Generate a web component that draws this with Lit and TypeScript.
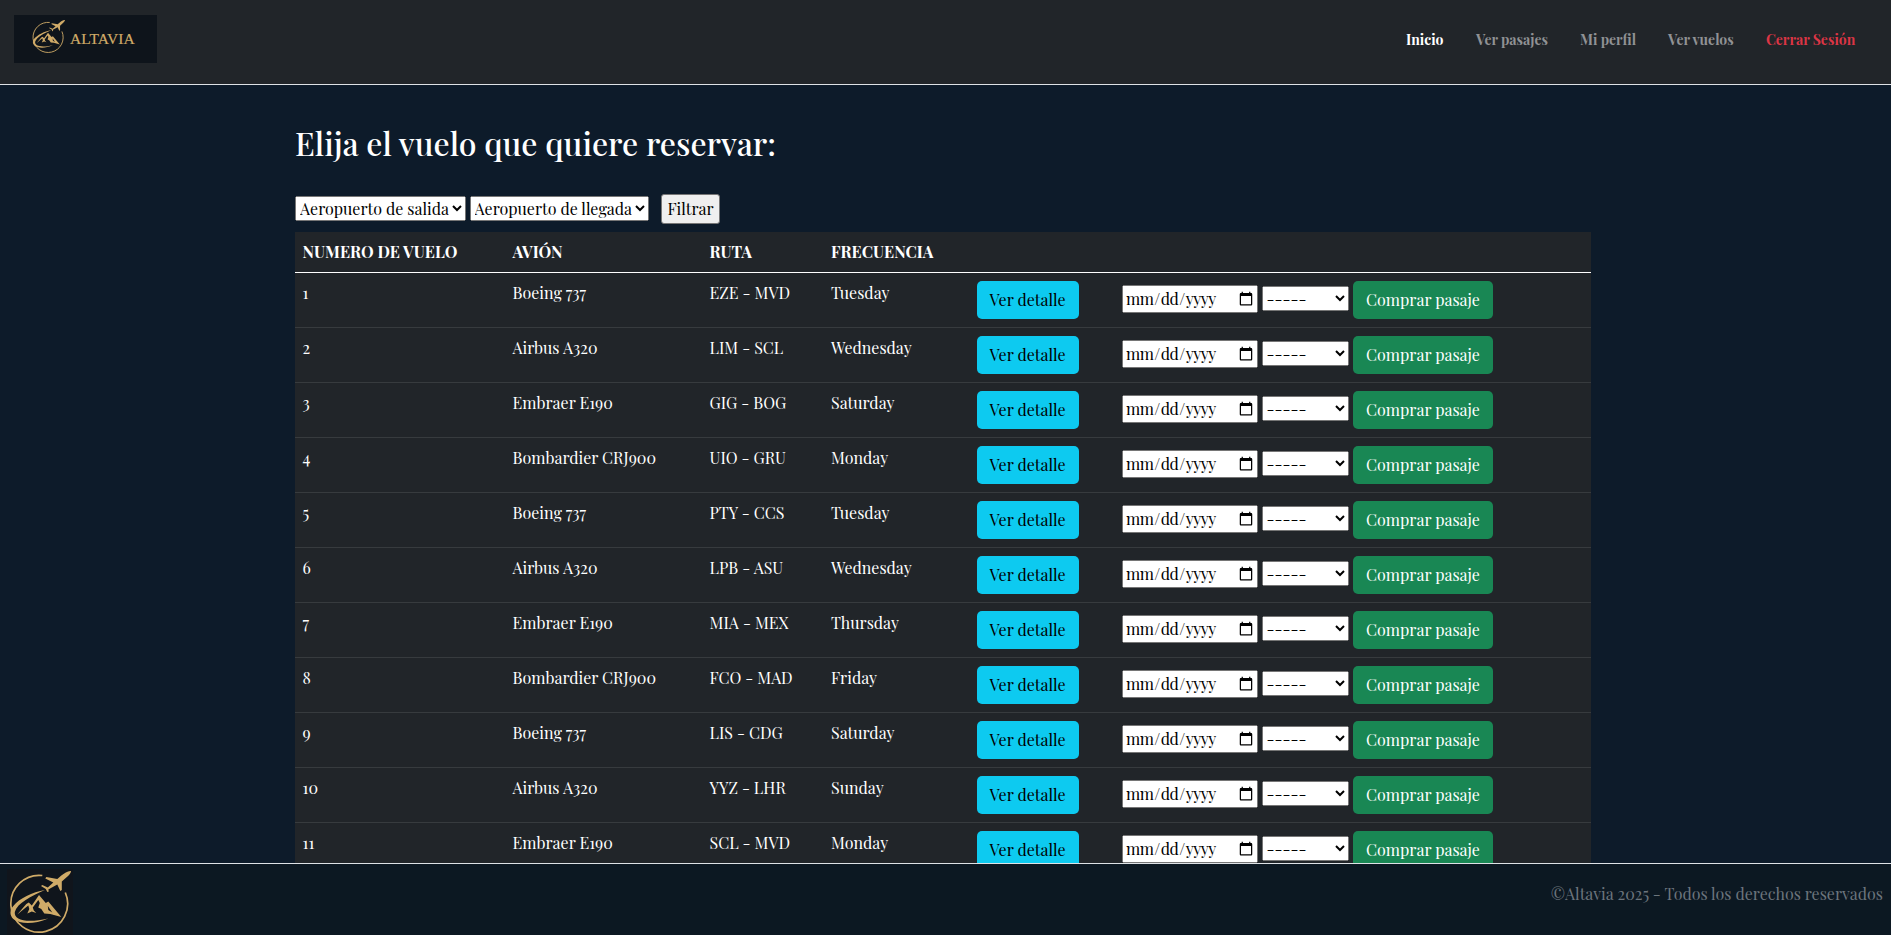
import { LitElement, html, css, svg } from "lit";
import { customElement, property } from "lit/decorators.js";

const FLIGHTS: [string, string, string][] = [
  ["Boeing 737", "EZE - MVD", "Tuesday"],
  ["Airbus A320", "LIM - SCL", "Wednesday"],
  ["Embraer E190", "GIG - BOG", "Saturday"],
  ["Bombardier CRJ900", "UIO - GRU", "Monday"],
  ["Boeing 737", "PTY - CCS", "Tuesday"],
  ["Airbus A320", "LPB - ASU", "Wednesday"],
  ["Embraer E190", "MIA - MEX", "Thursday"],
  ["Bombardier CRJ900", "FCO - MAD", "Friday"],
  ["Boeing 737", "LIS - CDG", "Saturday"],
  ["Airbus A320", "YYZ - LHR", "Sunday"],
  ["Embraer E190", "SCL - MVD", "Monday"],
];

@customElement("alta-emblem")
export class AltaEmblem extends LitElement {
  static styles = css`
    :host { display: block; }
    svg { display: block; width: 100%; height: 100%; }
  `;
  render() {
    return html`<svg viewBox="0.700 0 66 66" fill="#d0ab68">
      ${svg`
      <path d="M36 6.500A28.400 28.400 0 1 0 59 23.500" fill="none" stroke="#d0ab68" stroke-width="1.700"/>
      <path d="M38.700 21C25 27 11 34 8.500 43C7.500 51 20 54.500 42 49.500C28 55.500 14 55.500 7 50C3 46 3.500 41 7 37C13 29.500 26 23 38.700 21Z"/>
      <path d="M64.700 2C62 1.500 58 4 55 6.500L51 10L40 8L39 9.500L47 13.500L41.500 18.500L36 16L34.700 17L39.500 20L41 23L42.500 22.500L42 20.500L51 15.500L54 22L55.500 21L55.500 12.500L60 8.500C63 6 65 3.500 64.700 2Z"/>
      <path d="M11 45.500L20 35L22.500 33.500L25.500 36.500L32.700 26L39.500 34L42 32.500L55 48L44 45L38 44.500L35 40L32 38.500L33.500 34L32 31L26.500 38.500L27.500 41.500L30 44L25.500 42.500L21 44.500L23 40L22 36.500L17 40.500Z"/>
      <path d="M41.500 37L46 43.500L42 41Z" fill="#10151c"/>`}
    </svg>`;
  }
}

@customElement("flight-table")
export class FlightTable extends LitElement {
  @property({ attribute: false }) flights = FLIGHTS;
  static styles = css`
    :host { display: block; }
    .row { display: grid; grid-template-columns: 210px 197px 121.500px 145.500px 145.500px 1fr; height: 54px; border-bottom: 1px solid #373b3e; background: #212529; }
    .head { height: 40px; border-bottom-color: #fff; font-weight: bold; }
    .cell { padding: 8px 7.500px; white-space: nowrap; }
    .btn { height: 38px; box-sizing: border-box; border: 0; border-radius: 5px; padding: 0; font: inherit; }
    .info { width: 102px; background: #0dcaf0; color: #000; }
    .buy { width: 140px; background: #198754; color: #fff; margin-left: 4.500px; }
    .actions { display: flex; align-items: center; }
    input, select { box-sizing: border-box; font: inherit; margin: 0 0 2px; }
    input { width: 136px; height: 28px; letter-spacing: -0.550px; }
    select { width: 87px; height: 25px; margin: 0 0 3px 3.500px; }
  `;
  render() {
    return html`
      <div class="row head">
        <div class="cell">NUMERO DE VUELO</div><div class="cell">AVIÓN</div>
        <div class="cell">RUTA</div><div class="cell">FRECUENCIA</div>
      </div>
      ${this.flights.map(([plane, route, day], i) => html`
        <div class="row">
          <div class="cell">${i + 1}</div>
          <div class="cell">${plane}</div>
          <div class="cell">${route}</div>
          <div class="cell">${day}</div>
          <div class="cell"><button class="btn info">Ver detalle</button></div>
          <div class="cell actions">
            <input type="date" /><select><option>-----</option></select>
            <button class="btn buy">Comprar pasaje</button>
          </div>
        </div>`)}
    `;
  }
}

@customElement("app-root")
export class AppRoot extends LitElement {
  static styles = css`
    :host { display: flex; flex-direction: column; height: 935px; overflow: hidden; background: #0d1b2a; color: #fff; font: 16px/24px "Playfair Display", "Liberation Serif", serif; }
    header { display: flex; justify-content: space-between; align-items: flex-start; box-sizing: border-box; height: 85px; padding: 15px 35px 0 14px; background: #212529; border-bottom: 1px solid #dee2e6; flex: none; }
    .brand { display: flex; width: 143px; height: 48px; background: #0e141b; color: #d0ab68; font-family: "Liberation Serif", serif; font-size: 15.500px; letter-spacing: 0.100px; -webkit-text-stroke: 0.200px #d0ab68; }
    .brand alta-emblem { width: 35px; height: 35px; margin: 4px 4px 0 17px; }
    .brand span { margin-top: 12px; }
    nav { display: grid; grid-template-columns: 70px 104px 88px 98px 90px; padding-top: 13px; font-size: 14px; font-weight: bold; color: #909294; white-space: nowrap; }
    .active { color: #fff; }
    .logout { color: #dc3545; }
    main { flex: 1; min-height: 0; overflow: hidden; padding: 37px 300px 0 295px; }
    h1 { margin: 0; font-size: 32px; line-height: 42px; font-weight: 500; }
    .filters { display: flex; align-items: center; height: 30px; margin: 30px 0 8px; }
    select, .filter { box-sizing: border-box; font: inherit; margin: 0; padding: 0; }
    .from { width: 171px; height: 25px; margin-bottom: 1px; }
    .to { width: 179px; height: 25px; margin: 0 12.500px 1px 3.500px; }
    .filter { width: 59px; height: 30px; background: #efefef; border: 1px solid #767676; border-radius: 3px; color: #000; }
    flight-table { width: 1296px; }
    footer { display: flex; justify-content: space-between; flex: none; box-sizing: border-box; height: 72px; padding: 5px 8px 0 7px; background: #0c1822; border-top: 1px solid #dee2e6; color: #6c757d; }
    .mark { width: 66px; height: 66px; background: #10151c; }
    .copy { margin-top: 13px; }
  `;
  render() {
    return html`
      <header>
        <div class="brand"><alta-emblem></alta-emblem><span>ALTAVIA</span></div>
        <nav>
          <span class="active">Inicio</span><span>Ver pasajes</span><span>Mi perfil</span>
          <span>Ver vuelos</span><span class="logout">Cerrar Sesión</span>
        </nav>
      </header>
      <main>
        <h1>Elija el vuelo que quiere reservar:</h1>
        <div class="filters">
          <select class="from"><option>Aeropuerto de salida</option></select>
          <select class="to"><option>Aeropuerto de llegada</option></select>
          <button class="filter">Filtrar</button>
        </div>
        <flight-table></flight-table>
      </main>
      <footer>
        <alta-emblem class="mark"></alta-emblem>
        <span class="copy">©Altavia 2025 - Todos los derechos reservados</span>
      </footer>
    `;
  }
}
